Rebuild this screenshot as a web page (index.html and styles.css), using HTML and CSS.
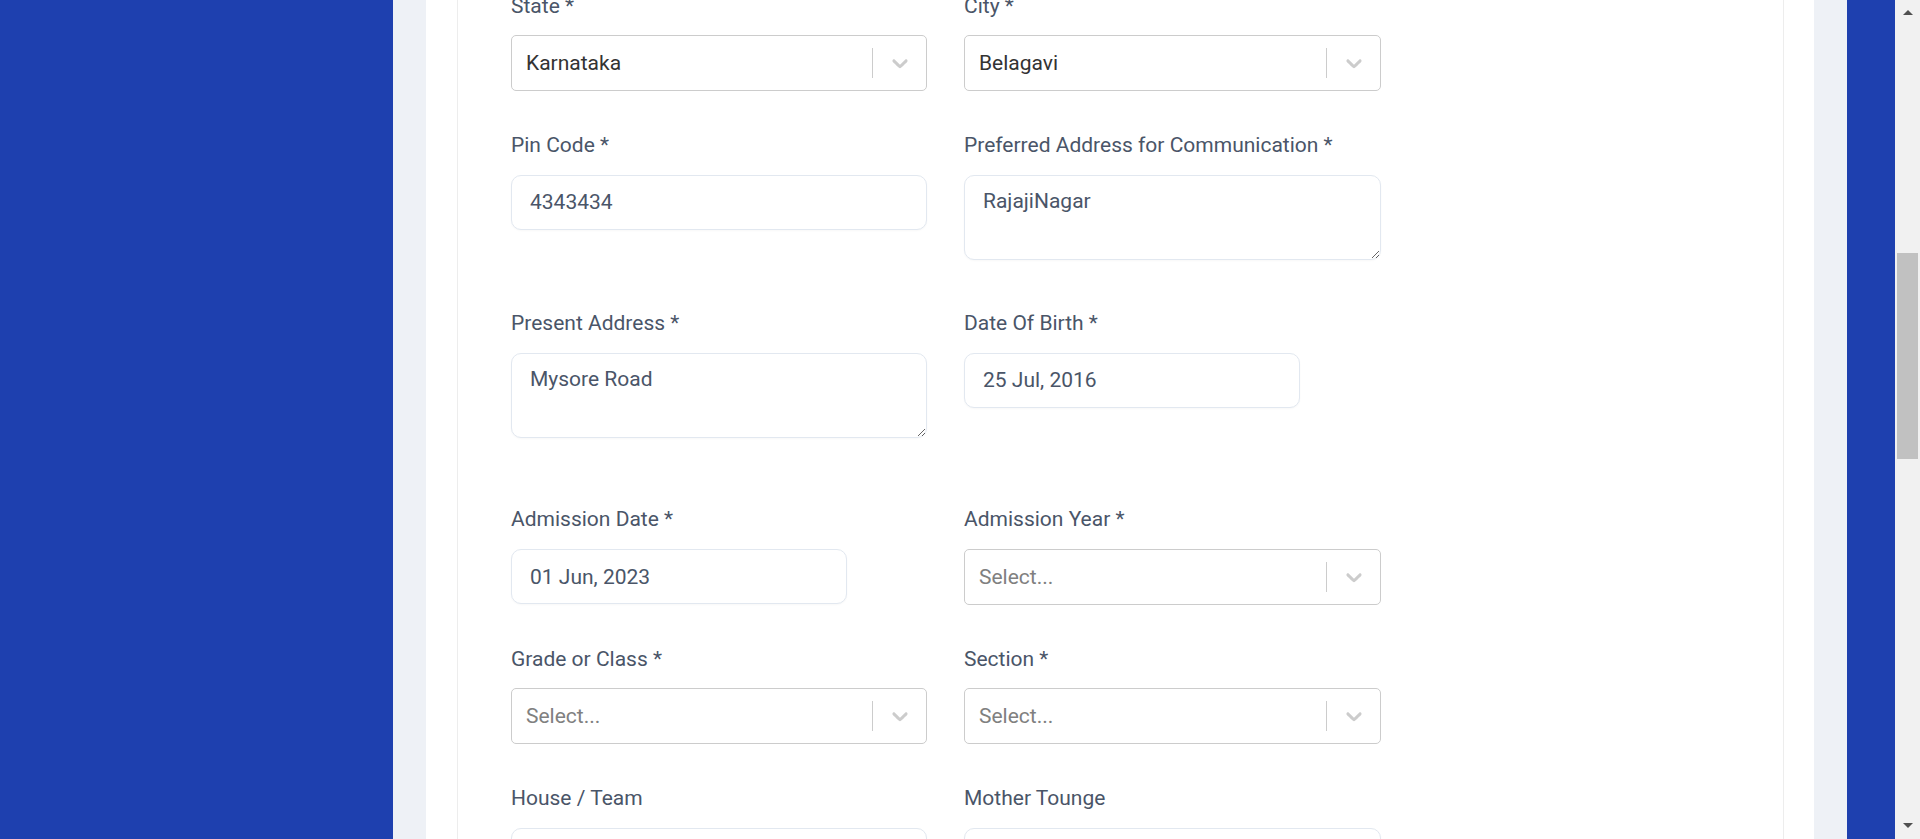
FILE: index.html
```html
<!DOCTYPE html>
<html lang="en">
<head>
<meta charset="utf-8">
<title>Student Form</title>
<link rel="stylesheet" href="styles.css">
</head>
<body>
<div class="app">
  <aside class="sidebar"></aside>
  <main class="main">
    <section class="card">
      <div class="panel">
        <form class="form">
          <div class="row">
            <div class="field">
              <label class="label">State *</label>
              <div class="select">
                <div class="select-value">Karnataka</div>
                <div class="select-indicators">
                  <span class="select-sep"></span>
                  <span class="select-arrow"><svg viewBox="0 0 20 20" width="26" height="26"><path d="M4.516 7.548c0.436-0.446 1.043-0.481 1.576 0l3.908 3.747 3.908-3.747c0.533-0.481 1.141-0.446 1.574 0 0.436 0.445 0.408 1.197 0 1.615-0.406 0.418-4.695 4.502-4.695 4.502-0.217 0.223-0.502 0.335-0.787 0.335s-0.57-0.112-0.789-0.335c0 0-4.287-4.084-4.695-4.502s-0.436-1.17 0-1.615z"/></svg></span>
                </div>
              </div>
            </div>
            <div class="field">
              <label class="label">City *</label>
              <div class="select">
                <div class="select-value">Belagavi</div>
                <div class="select-indicators">
                  <span class="select-sep"></span>
                  <span class="select-arrow"><svg viewBox="0 0 20 20" width="26" height="26"><path d="M4.516 7.548c0.436-0.446 1.043-0.481 1.576 0l3.908 3.747 3.908-3.747c0.533-0.481 1.141-0.446 1.574 0 0.436 0.445 0.408 1.197 0 1.615-0.406 0.418-4.695 4.502-4.695 4.502-0.217 0.223-0.502 0.335-0.787 0.335s-0.57-0.112-0.789-0.335c0 0-4.287-4.084-4.695-4.502s-0.436-1.17 0-1.615z"/></svg></span>
                </div>
              </div>
            </div>
          </div>

          <div class="row row-tall">
            <div class="field">
              <label class="label">Pin Code *</label>
              <input class="input" type="text" value="4343434">
            </div>
            <div class="field">
              <label class="label">Preferred Address for Communication *</label>
              <textarea class="input textarea" rows="2">RajajiNagar</textarea>
            </div>
          </div>

          <div class="row row-taller">
            <div class="field">
              <label class="label">Present Address *</label>
              <textarea class="input textarea" rows="2">Mysore Road</textarea>
            </div>
            <div class="field">
              <label class="label">Date Of Birth *</label>
              <input class="input input-date" type="text" value="25 Jul, 2016">
            </div>
          </div>

          <div class="row">
            <div class="field">
              <label class="label">Admission Date *</label>
              <input class="input input-date" type="text" value="01 Jun, 2023">
            </div>
            <div class="field">
              <label class="label">Admission Year *</label>
              <div class="select">
                <div class="select-value placeholder">Select...</div>
                <div class="select-indicators">
                  <span class="select-sep"></span>
                  <span class="select-arrow"><svg viewBox="0 0 20 20" width="26" height="26"><path d="M4.516 7.548c0.436-0.446 1.043-0.481 1.576 0l3.908 3.747 3.908-3.747c0.533-0.481 1.141-0.446 1.574 0 0.436 0.445 0.408 1.197 0 1.615-0.406 0.418-4.695 4.502-4.695 4.502-0.217 0.223-0.502 0.335-0.787 0.335s-0.57-0.112-0.789-0.335c0 0-4.287-4.084-4.695-4.502s-0.436-1.17 0-1.615z"/></svg></span>
                </div>
              </div>
            </div>
          </div>

          <div class="row">
            <div class="field">
              <label class="label">Grade or Class *</label>
              <div class="select">
                <div class="select-value placeholder">Select...</div>
                <div class="select-indicators">
                  <span class="select-sep"></span>
                  <span class="select-arrow"><svg viewBox="0 0 20 20" width="26" height="26"><path d="M4.516 7.548c0.436-0.446 1.043-0.481 1.576 0l3.908 3.747 3.908-3.747c0.533-0.481 1.141-0.446 1.574 0 0.436 0.445 0.408 1.197 0 1.615-0.406 0.418-4.695 4.502-4.695 4.502-0.217 0.223-0.502 0.335-0.787 0.335s-0.57-0.112-0.789-0.335c0 0-4.287-4.084-4.695-4.502s-0.436-1.17 0-1.615z"/></svg></span>
                </div>
              </div>
            </div>
            <div class="field">
              <label class="label">Section *</label>
              <div class="select">
                <div class="select-value placeholder">Select...</div>
                <div class="select-indicators">
                  <span class="select-sep"></span>
                  <span class="select-arrow"><svg viewBox="0 0 20 20" width="26" height="26"><path d="M4.516 7.548c0.436-0.446 1.043-0.481 1.576 0l3.908 3.747 3.908-3.747c0.533-0.481 1.141-0.446 1.574 0 0.436 0.445 0.408 1.197 0 1.615-0.406 0.418-4.695 4.502-4.695 4.502-0.217 0.223-0.502 0.335-0.787 0.335s-0.57-0.112-0.789-0.335c0 0-4.287-4.084-4.695-4.502s-0.436-1.17 0-1.615z"/></svg></span>
                </div>
              </div>
            </div>
          </div>

          <div class="row">
            <div class="field">
              <label class="label">House / Team</label>
              <input class="input" type="text" value="">
            </div>
            <div class="field">
              <label class="label">Mother Tounge</label>
              <input class="input" type="text" value="">
            </div>
          </div>
        </form>
      </div>
    </section>
  </main>
  <aside class="rightbar"></aside>
  <div class="scrollbar">
    <span class="sb-arrow sb-up"></span>
    <div class="sb-track"><div class="sb-thumb"></div></div>
    <span class="sb-arrow sb-down"></span>
  </div>
</div>
</body>
</html>
```

FILE: styles.css
```css
* { box-sizing: border-box; }

html, body {
  margin: 0;
  padding: 0;
  height: 100%;
  overflow: hidden;
}

body {
  font-family: Roboto, "Liberation Sans", Arial, sans-serif;
  background: #edf2f7;
}

.app {
  display: flex;
  height: 839px;
  width: 1920px;
}

.sidebar {
  width: 393px;
  flex: none;
  background: #1e40af;
}

.main {
  flex: 1;
  background: #eef1f6;
  padding: 0 33px;
  overflow: hidden;
}

.card {
  background: #ffffff;
  height: 100%;
  padding: 0 30px 0 31px;
}

.panel {
  height: 100%;
  border-left: 1px solid #ededed;
  border-right: 1px solid #ededed;
  padding-left: 53px;
  overflow: hidden;
}

.form {
  margin-top: -9.4px;
  width: 880px;
}

.row {
  display: grid;
  grid-template-columns: 416px 417px;
  column-gap: 37px;
  align-items: start;
  margin-bottom: 38.6px;
}

.row-tall { margin-bottom: 48.3px; }
.row-taller { margin-bottom: 66.7px; }

.field {
  display: flex;
  flex-direction: column;
  align-items: flex-start;
}

.label {
  display: block;
  font-size: 21px;
  line-height: 31.2px;
  color: #4a5568;
  margin-bottom: 13.5px;
}

.input {
  display: block;
  width: 100%;
  height: 55px;
  border: 1px solid #e2e8f0;
  border-radius: 10px;
  padding: 10px 17px 10px 18px;
  font-family: Roboto, "Liberation Sans", Arial, sans-serif;
  font-size: 21px;
  line-height: 31.2px;
  color: #4a5568;
  background: #fff;
  box-shadow: 0 1px 2px rgba(0, 0, 0, 0.03);
  outline: none;
}

.input-date { width: 336px; }

.textarea {
  height: 85px;
  padding-top: 10.5px;
  resize: vertical;
  overflow: hidden;
}

.select {
  display: flex;
  align-items: stretch;
  width: 100%;
  height: 56px;
  border: 1px solid #cccccc;
  border-radius: 5px;
  background: #fff;
}

.select-value {
  flex: 1;
  display: flex;
  align-items: center;
  padding-left: 14px;
  font-size: 21px;
  color: #333333;
}

.select-value.placeholder { color: #808080; }

.select-indicators {
  display: flex;
  align-items: center;
}

.select-sep {
  align-self: stretch;
  width: 1px;
  margin: 12px 0;
  background: #cccccc;
}

.select-arrow {
  display: flex;
  padding: 0 13px 0 14px;
  fill: #cccccc;
}

.rightbar {
  width: 48px;
  flex: none;
  background: #1e40af;
}

.scrollbar {
  width: 25px;
  flex: none;
  background: #f1f1f1;
  display: flex;
  flex-direction: column;
  align-items: center;
}

.sb-arrow {
  width: 0;
  height: 0;
  border-left: 5px solid transparent;
  border-right: 5px solid transparent;
}

.sb-up {
  border-bottom: 5px solid #505050;
  margin-top: 10px;
}

.sb-down {
  border-top: 5px solid #505050;
  margin-bottom: 11px;
}

.sb-track {
  flex: 1;
  width: 100%;
  padding: 238px 2px 0;
}

.sb-thumb {
  height: 206px;
  background: #c1c1c1;
}
```
